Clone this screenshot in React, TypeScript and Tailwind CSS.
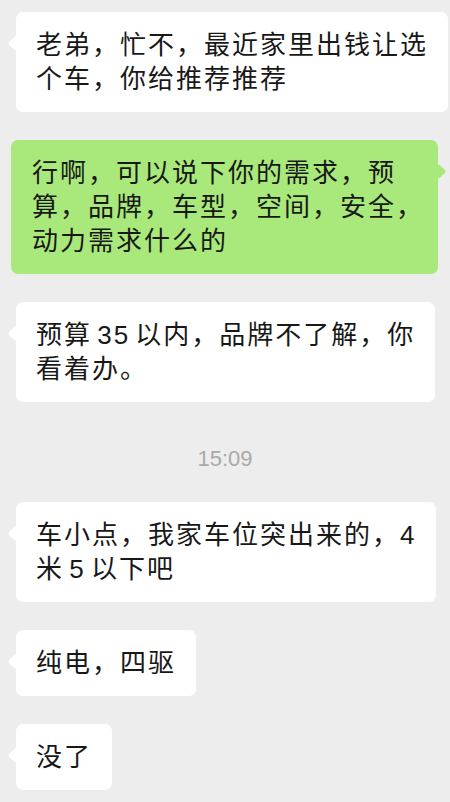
import React from 'react'

type Msg =
    | { kind: 'in' | 'out'; lines: string[] }
    | { kind: 'time'; text: string }

const messages: Msg[] = [
    { kind: 'in', lines: ['老弟，忙不，最近家里出钱让选', '个车，你给推荐推荐'] },
    { kind: 'out', lines: ['行啊，可以说下你的需求，预', '算，品牌，车型，空间，安全，', '动力需求什么的'] },
    { kind: 'in', lines: ['预算 35 以内，品牌不了解，你', '看着办。'] },
    { kind: 'time', text: '15:09' },
    { kind: 'in', lines: ['车小点，我家车位突出来的，4', '米 5 以下吧'] },
    { kind: 'in', lines: ['纯电，四驱'] },
    { kind: 'in', lines: ['没了'] },
]

function Bubble({ kind, lines }: { kind: 'in' | 'out'; lines: string[] }) {
    const isOut = kind === 'out'
    return (
        <div className={isOut ? 'flex pl-[11px]' : 'flex pl-4'}>
            <div
                className={
                    'relative rounded-[7px] py-4 text-[26px] leading-[34px] tracking-[2px] [word-spacing:-4px] text-[#181818] ' +
                    (isOut ? 'bg-[#a9e97b] pl-[21px] pr-[14px]' : 'bg-white pl-5 pr-5')
                }
            >
                <span
                    className={
                        'absolute top-[26px] h-[11px] w-[11px] rotate-45 rounded-[2px] ' +
                        (isOut ? 'right-[-6px] bg-[#a9e97b]' : 'left-[-6px] bg-white')
                    }
                />
                {lines.map((line, i) => (
                    <div key={i} className="relative whitespace-nowrap">
                        {line}
                    </div>
                ))}
            </div>
        </div>
    )
}

export default function App() {
    return (
        <div
            className="flex h-[802px] w-[450px] flex-col gap-[28px] overflow-hidden bg-[#ededed] pt-3"
            style={{ fontFamily: '"Liberation Sans", "Noto Sans CJK SC", sans-serif' }}
        >
            {messages.map((m, i) =>
                m.kind === 'time' ? (
                    <div
                        key={i}
                        className="mt-[13px] h-[31px] text-center text-[22px] leading-[31px] text-[#a9a9a9]"
                    >
                        {m.text}
                    </div>
                ) : (
                    <Bubble key={i} kind={m.kind} lines={m.lines} />
                )
            )}
        </div>
    )
}
